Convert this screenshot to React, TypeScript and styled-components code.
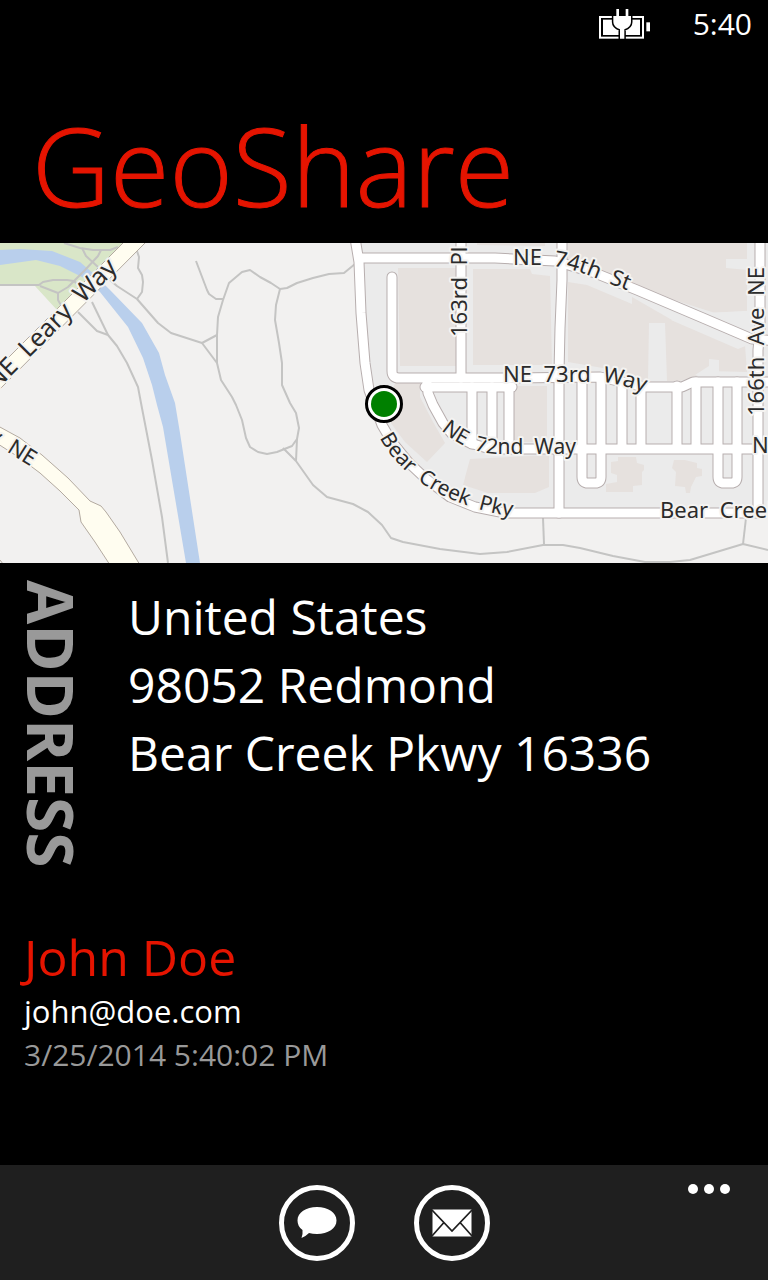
import React from "react";
import styled, { createGlobalStyle } from "styled-components";

const GlobalStyle = createGlobalStyle`
  * { box-sizing: border-box; }
  body {
    margin: 0;
    background: #000;
    color: #fff;
    font-family: "Open Sans", "Noto Sans", sans-serif;
  }
  h1, h2, p { margin: 0; font-weight: 400; }
`;

const Page = styled.div`
  display: flex;
  flex-direction: column;
  min-height: 100vh;
`;

const StatusBar = styled.div`
  display: flex;
  align-items: center;
  justify-content: flex-end;
  gap: 43px;
  height: 48px;
  padding: 0 16px;
`;

const Clock = styled.time`
  font-size: 30px;
  line-height: 48px;
`;

const Title = styled.h1`
  padding: 58px 32px 17px;
  color: #e51400;
  font-size: 108px;
  line-height: 120px;
  -webkit-text-stroke: 1px #e51400;
  && { font-weight: 300; }
`;

const MapView = styled.svg`
  display: block;
  width: 100%;
  height: 320px;
  background: #f2f1f0;
`;

const MapLabel = styled.text<{ $size?: number }>`
  font-family: "Noto Sans", "Open Sans", sans-serif;
  font-size: ${({ $size = 22 }) => $size}px;
  fill: #2b2b2b;
  stroke: #f4f3f1;
  stroke-width: 4px;
  stroke-linejoin: round;
  paint-order: stroke;
`;

const Details = styled.main`
  flex: 1;
  padding: 17px 24px;
`;

const AddressBlock = styled.section`
  display: flex;
  gap: 50px;
  align-items: flex-start;
`;

const AddressHeading = styled.h2`
  writing-mode: vertical-rl;
  color: #999;
  font-size: 64px;
  line-height: 54px;
  && { font-weight: 700; }
`;

const AddressLines = styled.address`
  padding-top: 3px;
  font-size: 48px;
  font-style: normal;
  line-height: 68px;
`;

const Contact = styled.section`
  padding-top: 57px;
`;

const ContactName = styled.h2`
  color: #e51400;
  font-size: 50px;
  line-height: 64px;
`;

const ContactEmail = styled.a`
  display: block;
  color: #fff;
  font-size: 31px;
  line-height: 44px;
  text-decoration: none;
`;

const Stamp = styled.p`
  color: #999;
  font-size: 30px;
  line-height: 44px;
`;

const AppBar = styled.footer`
  display: grid;
  grid-template-columns: 1fr auto 1fr;
  height: 115px;
  background: #1f1f1f;
`;

const Actions = styled.div`
  grid-column: 2;
  display: flex;
  align-items: center;
  gap: 59px;
`;

const RoundButton = styled.button`
  display: flex;
  align-items: center;
  justify-content: center;
  width: 76px;
  height: 76px;
  padding: 0;
  border: 5px solid #fff;
  border-radius: 50%;
  background: none;
`;

const MoreButton = styled.button`
  justify-self: end;
  align-self: start;
  display: flex;
  gap: 6px;
  padding: 19px 38px;
  border: 0;
  background: none;
`;

const Dot = styled.span`
  width: 10px;
  height: 10px;
  border-radius: 50%;
  background: #fff;
`;

const paths = [
  "M64 243 L80 248 L93 250 H110 L118 247",
  "M82 248 L86 256 L98 267",
  "M101 250 L98 256 L85 270 L75 280 L68 287 L58 293 L40 286",
  "M0 285 H39 L43 282 L53 280 H67 L74 281 L80 287",
  "M58 293 V300 L62 307",
  "M92 302 L108 335",
  "M78 312 L97 331 L108 335 L117 346 L127 363 L138 387 L141 403 L152 460 L162 517 L168 563",
  "M110 280 L117 286 L137 299 L158 323 L171 333 L202 343 L217 335",
  "M137 299 L142 292 L143 282 L142 275 L138 268 L139 257 L137 251",
  "M196 261 L207 290 L209 294 L216 299 H223",
  "M355 264 L344 273 L329 274 L313 278 L297 283 L287 288 L280 289 L271 283 L260 277 L250 270 L242 272 L229 283 L223 300 L218 317 L217 335 V363 L221 380 L232 397 L236 405 L242 420 L246 438 L250 447 L258 452 L267 454 L277 452 L292 446 L297 439",
  "M202 343 L217 363",
  "M280 289 L276 305 L275 320 L279 343 L282 363 V385 L290 403 L296 413 L299 428 L297 439 L296 461",
  "M283 448 L296 461 L313 485 L327 497 L353 504 L368 512 L382 525 L391 538 L403 542 L440 549 L480 554 L507 552 L543 545 H563 L580 548 L613 556 L645 562 H670 L690 560 L743 544 L768 550",
  "M543 518 L544 544",
  "M746 518 L743 544",
];

const buildings = [
  "398,268 456,268 456,366 400,366",
  "473,269 530,269 532,274 550,276 552,365 473,365",
  "477,243 545,243 545,246 477,245",
  "568,243 747,243 747,311 715,313 630,286 568,264",
  "568,282 587,285 632,304 632,297 672,320 738,348 745,345 747,372 709,371 693,377 680,381 640,381 620,371 568,362",
  "395,383 420,383 420,397 433,422 445,443 427,462 405,442 385,415",
  "470,459 549,455 549,487 535,493 488,493 463,485 467,470",
  "514,386 547,386 547,442 514,442",
  "618,457 636,457 637,463 644,465 644,470 642,472 642,485 633,486 633,492 606,492 606,484 617,482 617,475 611,473 611,462 618,461",
  "674,460 685,460 697,463 697,468 702,469 702,476 696,477 691,487 690,493 686,493 685,487 675,486 676,472 672,468",
];

const clearings = [
  "649,323 665,323 667,381 648,381",
  "726,259 747,259 747,270 726,268",
  "709,366 709,359 719,360 719,375 695,375",
  "671,320 680,314 748,311 748,345 738,349",
];

const roads = [
  "M355 238 L359 262 L361 313 L365 363 L369 390 L382 425 L392 442 L409 463 L425 478 L450 497 L475 507 L505 513 H780",
  "M360 258 H495 L555 261 L595 273 L637 290 L703 318 L752 339 L780 341",
  "M760 238 V330 L758 350 V513",
  "M461 238 V378",
  "M562 238 V280 L560 328 L559 373 V513",
  "M392 277 V371 Q392 378 399 378 H512 L600 377 L645 387 H682 L693 382 H780",
  "M425 387 H512",
  "M427 383 L428 393 L433 405 L443 423 L452 434 L470 443 L490 449 H780",
  "M472 387 V444",
  "M492 387 V448",
  "M509 387 V448",
  "M582 378 V477 Q582 483 588 483 H595 Q601 483 601 477 V378",
  "M622 384 V448",
  "M641 387 V448",
  "M677 386 V448",
  "M696 382 V448",
  "M718 382 V477 Q718 483 724 483 H731 Q737 483 737 477 V382",
];

const learyWay = "M158 219 L-30 407";
const learyEdge = "M145 243 L0 389 M123 243 L0 366";

const curves = [
  { id: "leary", size: 25, d: "M-4 391 L160 227", text: "NE\u00a0\u00a0Leary\u00a0\u00a0Way" },
  { id: "ne-west", size: 22, d: "M-13 439 L58 484", text: "y\u00a0\u00a0NE" },
  { id: "bear-creek", size: 21, d: "M380 438 C392 462 430 508 530 519", text: "Bear\u00a0\u00a0Creek\u00a0\u00a0Pky" },
  { id: "ne74", d: "M513 265 H545 Q570 267 598 279 L660 303", text: "NE\u00a0\u00a074th\u00a0\u00a0St" },
  { id: "ne73", d: "M503 382 H595 Q612 380 670 401", text: "NE\u00a0\u00a073rd\u00a0\u00a0Way" },
  { id: "ne72", size: 21, d: "M441 430 Q468 454 500 454 H600", text: "NE\u00a0\u00a072nd\u00a0\u00a0Way" },
  { id: "pl163", d: "M467 337 V230", text: "163rd\u00a0\u00a0Pl" },
  { id: "ave166", d: "M764 416 V240", text: "166th\u00a0\u00a0Ave\u00a0\u00a0NE" },
  { id: "bear-east", d: "M660 518 H820", text: "Bear\u00a0\u00a0Creek" },
  { id: "n-east", d: "M752 453 H860", text: "NE\u00a0\u00a072nd" },
];

const StreetMap = () => (
  <MapView
    viewBox="0 243 768 320"
    preserveAspectRatio="xMidYMid slice"
    role="img"
    aria-label="Map of Bear Creek Parkway, Redmond"
  >
    <polygon points="0,243 125,243 57,310 35,286 0,286" fill="#d9e6c8" />
    <path
      d="M0 250 L20 249 L52 251 L80 262 L95 275 L110 290 L142 323 L159 353 L165 375 L175 403 L180 433 L200 563 H186 L163 427 L157 405 L152 385 L143 358 L128 327 L100 292 L86 279 L60 266 L36 260 L0 265 Z"
      fill="#b9cfec"
    />
    <polygon
      points="355,243 361,313 369,390 392,442 425,478 475,507 505,513 768,513 768,243"
      fill="#ebebeb"
    />
    <g fill="#e6e1de">
      {buildings.map((points) => <polygon key={points} points={points} />)}
    </g>
    <g fill="#ebebeb">
      {clearings.map((points) => <polygon key={points} points={points} />)}
    </g>
    <g fill="none" stroke="#c4c4c3" strokeWidth="2" strokeLinejoin="round">
      {paths.map((d) => <path key={d} d={d} />)}
    </g>
    <path d={learyWay} stroke="#fffdf0" strokeWidth="16" />
    <path d={learyEdge} stroke="#b3aaa0" strokeWidth="1" />
    <path
      d="M-2 426 L20 438 L42 455 L68 478 L90 501 L101 506 L106 512 L120 532 L140 565 H110 L95 542 L81 522 L79 510 L60 491 L40 473 L20 458 L-2 444 Z"
      fill="#fffdf0"
      stroke="#b3aaa0"
      strokeWidth="1"
    />
    <path d="M0 560 L3 564" stroke="#b3aaa0" />
    <g fill="none" stroke="#b7aeae" strokeWidth="11" strokeLinecap="round" strokeLinejoin="round">
      {roads.map((d) => <path key={d} d={d} />)}
    </g>
    <g fill="none" stroke="#fff" strokeWidth="9" strokeLinecap="round" strokeLinejoin="round">
      {roads.map((d) => <path key={d} d={d} />)}
    </g>
    <defs>
      {curves.map(({ id, d }) => <path key={id} id={id} d={d} />)}
    </defs>
    {curves.map(({ id, size, text }) => (
      <MapLabel key={id} $size={size}>
        <textPath href={`#${id}`}>{text}</textPath>
      </MapLabel>
    ))}
    <circle cx="384" cy="404" r="17.5" fill="#fff" stroke="#000" strokeWidth="3" />
    <circle cx="384" cy="404" r="13" fill="#008000" />
  </MapView>
);

const plug =
  "M52 0 H60 V21 H80 V0 H88 V21 H96 V39 Q96 54 76 61 V89 H63 V61 Q43 54 43 39 V21 H52 Z";

const BatteryIcon = () => (
  <svg width="51" height="30" viewBox="0 0 153 90" role="img" aria-label="Battery charging">
    <rect x="3" y="24" width="129" height="62" fill="none" stroke="#fff" strokeWidth="6" />
    <rect x="12" y="32" width="111" height="46" fill="#fff" />
    <rect x="142" y="40" width="11" height="27" fill="#fff" />
    <path d={plug} fill="#fff" stroke="#000" strokeWidth="9" paintOrder="stroke" />
  </svg>
);

const ChatIcon = () => (
  <svg width="40" height="32" viewBox="0 0 40 32" aria-hidden="true">
    <path
      d="M20 0 C31 0 39.500 5.500 39.500 13.500 C39.500 21.500 31 27 20 27 Q15.500 27 12 26 Q8.500 29.500 4.500 31 Q6 27 5.500 23 C2 20.500 0.500 17 0.500 13.500 C0.500 5.500 9 0 20 0 Z"
      fill="#fff"
    />
  </svg>
);

const MailIcon = () => (
  <svg width="40" height="28" viewBox="0 0 40 28" aria-hidden="true">
    <rect x="0.500" y="0.500" width="39" height="27" fill="#fff" />
    <path
      d="M0 1 L20 22 L40 1 M0 27 L11.500 14 M40 27 L28.500 14"
      fill="none"
      stroke="#1f1f1f"
      strokeWidth="1.700"
    />
  </svg>
);

export default function App() {
  return (
    <Page>
      <GlobalStyle />
      <StatusBar>
        <BatteryIcon />
        <Clock>5:40</Clock>
      </StatusBar>
      <Title>GeoShare</Title>
      <StreetMap />
      <Details>
        <AddressBlock>
          <AddressHeading>ADDRESS</AddressHeading>
          <AddressLines>
            United States
            <br />
            98052 Redmond
            <br />
            Bear Creek Pkwy 16336
          </AddressLines>
        </AddressBlock>
        <Contact>
          <ContactName>John Doe</ContactName>
          <ContactEmail href="mailto:john@doe.com">john@doe.com</ContactEmail>
          <Stamp>3/25/2014 5:40:02 PM</Stamp>
        </Contact>
      </Details>
      <AppBar>
        <Actions>
          <RoundButton type="button" aria-label="Message">
            <ChatIcon />
          </RoundButton>
          <RoundButton type="button" aria-label="Email">
            <MailIcon />
          </RoundButton>
        </Actions>
        <MoreButton type="button" aria-label="More">
          <Dot />
          <Dot />
          <Dot />
        </MoreButton>
      </AppBar>
    </Page>
  );
}
